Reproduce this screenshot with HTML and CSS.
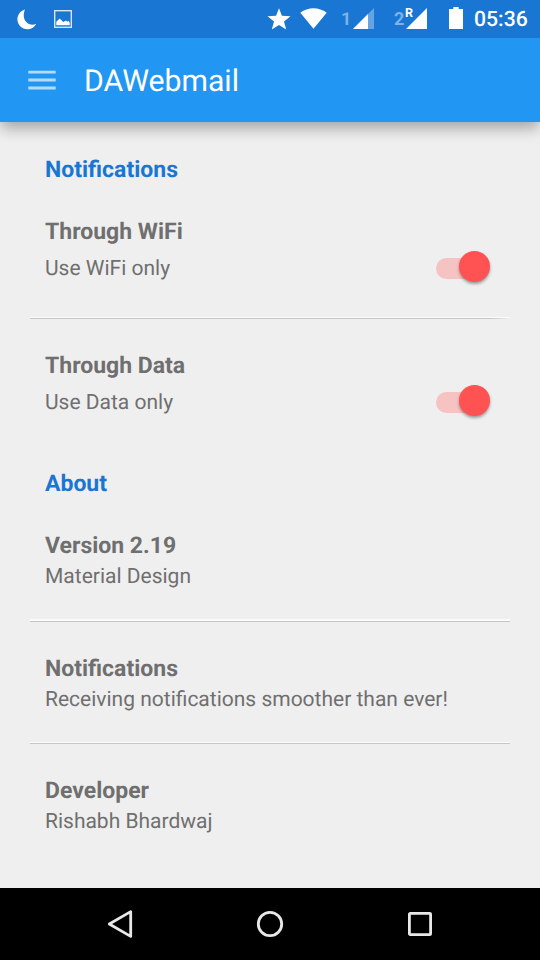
FILE: index.html
```html
<!DOCTYPE html>
<html lang="en">
<head>
<meta charset="utf-8">
<title>DAWebmail</title>
<link rel="stylesheet" href="styles.css">
</head>
<body>
<div class="screen">
  <div class="status">
    <svg class="moon" width="20" height="21" viewBox="0 0 20 21"><path d="M8 .5A10 10 0 1 0 19.3 14.8C12 18.2 3.5 11.5 8 .5Z" fill="#fff"/></svg>
    <svg class="photo" width="18" height="18" viewBox="0 0 18 18"><rect x=".7" y=".7" width="16.6" height="16.6" fill="none" stroke="#d6e6f7" stroke-width="1.4"/><path d="M2.3 15.3V11.7L5.7 8.6L9.3 12L12 10.6L13.2 11.7L14.3 10.8L15.7 12.4V15.3Z" fill="#fff"/></svg>
    <svg class="star" width="24" height="22" viewBox="0 0 24 22"><path d="M12 .2L14.9 7.7L23.5 8.2L17 13.4L19.2 21.5L12 17L4.8 21.5L7 13.4L.5 8.2L9.1 7.7Z" fill="#fff"/></svg>
    <svg class="wifi" width="27" height="21" viewBox="0 0 27 21"><path d="M.3 4.7C8-1.3 19-1.3 26.7 4.7L13.5 20.8Z" fill="#fff"/></svg>
    <span class="sim sim-one">1</span>
    <svg class="signal" width="21" height="21" viewBox="0 0 21 21"><path d="M0 21L21 0V21Z" fill="#65a3e2"/><path d="M0 21L15 6V21Z" fill="#fff"/></svg>
    <span class="sim sim-two">2</span>
    <div class="roaming"><span class="r">R</span><svg width="21" height="21" viewBox="0 0 21 21"><path d="M0 21L21 0V21Z" fill="#fff"/></svg></div>
    <svg class="battery" width="14" height="22" viewBox="0 0 14 22"><path d="M4.3 0H9.7V2H14V22H0V2H4.3Z" fill="#fff"/></svg>
    <span class="clock">05:36</span>
  </div>
  <header class="toolbar">
    <svg width="28" height="20" viewBox="0 0 28 20"><path d="M.3 2.2H27.7M.3 10H27.7M.3 18H27.7" stroke="#b5dbfb" stroke-width="2.8"/></svg>
    <h1>DAWebmail</h1>
  </header>
  <main>
    <h2>Notifications</h2>
    <section class="item toggle">
      <h3>Through WiFi</h3>
      <div class="row"><p>Use WiFi only</p><div class="switch"><div class="thumb"></div></div></div>
    </section>
    <div class="divider fade"></div>
    <section class="item toggle">
      <h3>Through Data</h3>
      <div class="row"><p>Use Data only</p><div class="switch"><div class="thumb"></div></div></div>
    </section>
    <h2 class="about">About</h2>
    <section class="item">
      <h3>Version 2.19</h3>
      <p>Material Design</p>
    </section>
    <div class="divider thick"></div>
    <section class="item">
      <h3>Notifications</h3>
      <p>Receiving notifications smoother than ever!</p>
    </section>
    <div class="divider"></div>
    <section class="item">
      <h3>Developer</h3>
      <p>Rishabh Bhardwaj</p>
    </section>
  </main>
  <nav>
    <svg width="30" height="30" viewBox="0 0 30 30"><path d="M4.3 15L25.7 2.6V27.4Z" fill="none" stroke="#e8e8e8" stroke-width="2.8" stroke-linejoin="round"/></svg>
    <svg width="30" height="30" viewBox="0 0 30 30"><circle cx="15" cy="15" r="11.7" fill="none" stroke="#e8e8e8" stroke-width="2.8"/></svg>
    <svg width="30" height="30" viewBox="0 0 30 30"><rect x="4.4" y="4.4" width="21.2" height="21.2" rx=".8" fill="none" stroke="#e8e8e8" stroke-width="2.8"/></svg>
  </nav>
</div>
</body>
</html>
```
FILE: styles.css
```css
* { box-sizing: border-box; margin: 0; padding: 0; }
body { font-family: Roboto, sans-serif; background: #efefef; text-rendering: geometricPrecision; }
.screen { width: 540px; height: 960px; display: flex; flex-direction: column; overflow: hidden; }
svg { display: block; flex: none; }

.status { height: 38px; background: #1976d2; display: flex; align-items: flex-start; flex: none; line-height: 24px; position: relative; z-index: 2; }
.moon { margin: 9px 0 0 17px; }
.photo { margin: 10px 0 0 17px; }
.star { margin: 8px 0 0 195px; }
.wifi { margin: 8px 0 0 9px; }
.sim { color: #7fb2e7; font-size: 18px; font-weight: 700; width: 12px; margin-top: 8px; }
.sim-one { margin-left: 14px; }
.signal { margin: 8px 0 0 0; }
.sim-two { margin-left: 20px; }
.roaming { margin: 8px 0 0 0; position: relative; }
.r { position: absolute; left: -1px; top: -1px; font-size: 12.5px; line-height: 14px; font-weight: 700; color: #fff; }
.battery { margin: 7px 0 0 22px; }
.clock { margin: 8px 0 0 11px; color: #fff; font-size: 21.2px; font-weight: 500; }

.toolbar { height: 84px; flex: none; background: #2196f3; display: flex; align-items: center; padding-left: 28px; position: relative; box-shadow: 0 7px 14px -1px rgba(0, 0, 0, .32); }
h1 { margin: 3px 0 0 28px; font-size: 30.2px; font-weight: 400; color: #fff; line-height: 40px; }

main { flex: 1; padding: 33px 30px 0; color: #6f6f6f; }
h2, h3 { font-size: 23px; font-weight: 700; line-height: 30px; margin-left: 15px; }
h2 { color: #1976d2; margin-bottom: 32px; }
.about { margin-top: 52px; }
p { font-size: 21px; line-height: 32px; height: 30px; margin: 0 0 0 15px; }
.row { display: flex; justify-content: space-between; margin-top: 6px; height: 30px; }
.switch { width: 53px; height: 21px; margin: 5px 21px 0 0; border-radius: 11px; background: #f6c3c3; position: relative; }
.thumb { position: absolute; right: -1px; top: -7px; width: 31px; height: 31px; border-radius: 50%; background: #ff5252; box-shadow: 0 2px 3px rgba(0, 0, 0, .35); }
.divider { height: 2px; margin: 28px 0 32px; border-top: 1px solid #fbfbfb; background: #c6c6c6; }
.fade { margin-top: 34px; background: linear-gradient(to right, #c6c6c6 96%, #efefef); }
.thick { height: 3px; border-top-width: 2px; }

nav { height: 72px; flex: none; background: #000; display: flex; justify-content: center; align-items: center; gap: 120px; }
```
